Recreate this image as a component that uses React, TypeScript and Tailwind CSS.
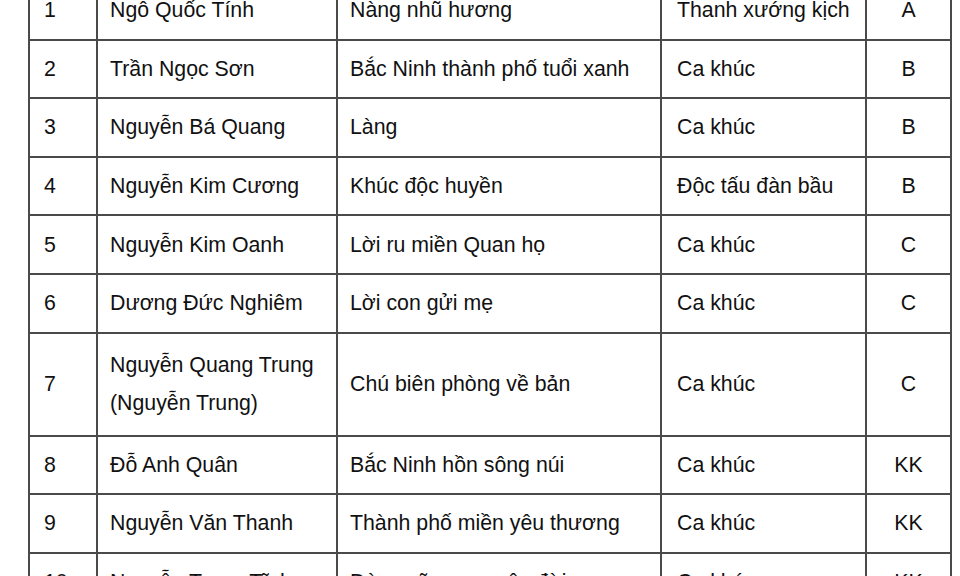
const rows: { no: string; name: string[]; work: string; genre: string; prize: string; tall?: boolean }[] = [
  { no: '1', name: ['Ngô Quốc Tính'], work: 'Nàng nhũ hương', genre: 'Thanh xướng kịch', prize: 'A' },
  { no: '2', name: ['Trần Ngọc Sơn'], work: 'Bắc Ninh thành phố tuổi xanh', genre: 'Ca khúc', prize: 'B' },
  { no: '3', name: ['Nguyễn Bá Quang'], work: 'Làng', genre: 'Ca khúc', prize: 'B' },
  { no: '4', name: ['Nguyễn Kim Cương'], work: 'Khúc độc huyền', genre: 'Độc tấu đàn bầu', prize: 'B' },
  { no: '5', name: ['Nguyễn Kim Oanh'], work: 'Lời ru miền Quan họ', genre: 'Ca khúc', prize: 'C' },
  { no: '6', name: ['Dương Đức Nghiêm'], work: 'Lời con gửi mẹ', genre: 'Ca khúc', prize: 'C' },
  { no: '7', name: ['Nguyễn Quang Trung', '(Nguyễn Trung)'], work: 'Chú biên phòng về bản', genre: 'Ca khúc', prize: 'C', tall: true },
  { no: '8', name: ['Đỗ Anh Quân'], work: 'Bắc Ninh hồn sông núi', genre: 'Ca khúc', prize: 'KK' },
  { no: '9', name: ['Nguyễn Văn Thanh'], work: 'Thành phố miền yêu thương', genre: 'Ca khúc', prize: 'KK' },
  { no: '10', name: ['Nguyễn Trọng Tĩnh'], work: 'Dòng sữa mẹ cuộc đời', genre: 'Ca khúc', prize: 'KK' },
];

export default function App() {
  return (
    <div className="w-[960px] h-[576px] overflow-hidden bg-white">
      <div className="pl-[28px] -mt-[20px]">
        <table
          className="w-[922px] table-fixed border-collapse text-[21.3px] leading-[38px] text-[#111]"
          style={{ fontFamily: '"Liberation Sans", Arial, sans-serif' }}
        >
          <colgroup>
            <col className="w-[68px]" />
            <col className="w-[240px]" />
            <col className="w-[324px]" />
            <col className="w-[205px]" />
            <col className="w-[85px]" />
          </colgroup>
          <tbody>
            {rows.map((r) => (
              <tr key={r.no} className={r.tall ? 'h-[103px]' : 'h-[58.6px]'}>
                <td className="border-2 border-[#4a4a4a] pl-[14px] align-middle">{r.no}</td>
                <td className="border-2 border-[#4a4a4a] pl-[12px] align-middle">
                  {r.name.map((n) => (
                    <div key={n}>{n}</div>
                  ))}
                </td>
                <td className="border-2 border-[#4a4a4a] pl-[12px] align-middle">{r.work}</td>
                <td className="border-2 border-[#4a4a4a] pl-[15px] align-middle">{r.genre}</td>
                <td className="border-2 border-[#4a4a4a] text-center align-middle">{r.prize}</td>
              </tr>
            ))}
          </tbody>
        </table>
      </div>
    </div>
  );
}
